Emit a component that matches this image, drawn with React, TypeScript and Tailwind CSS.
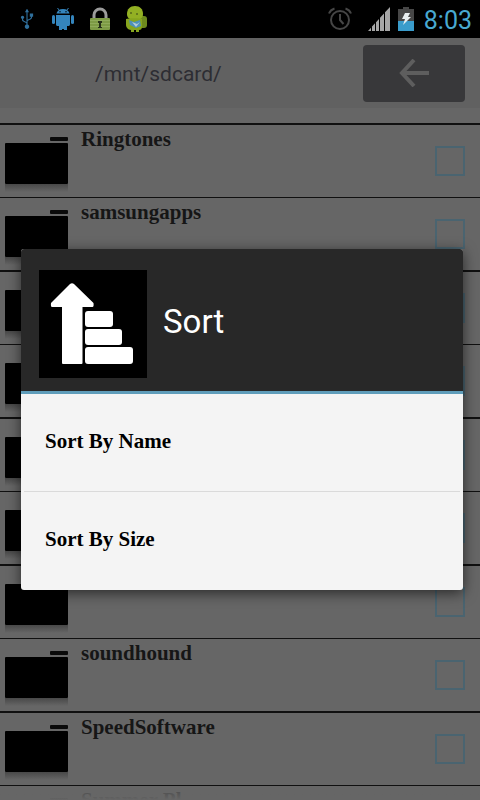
import { FaUsb } from "react-icons/fa";

const folders = [
  { id: 1, name: "Ringtones" },
  { id: 2, name: "samsungapps" },
  { id: 3, name: "" },
  { id: 4, name: "" },
  { id: 5, name: "" },
  { id: 6, name: "" },
  { id: 7, name: "" },
  { id: 8, name: "soundhound" },
  { id: 9, name: "SpeedSoftware" },
  { id: 10, name: "Summer Pl" },
];

const sortOptions = ["Sort By Name", "Sort By Size"];

function UsbIcon() {
  return <FaUsb className="-rotate-90 text-[#2f6f9c]" size={20} />;
}

function DebugIcon() {
  return (
    <svg width="24" height="24" viewBox="0 0 24 24" fill="#3485bd">
      <path d="M5.5 6.5C6 3.8 8.500 2 12 2s6 1.800 6.500 4.500z" />
      <path d="M6.500 1l2 2.500M17.500 1l-2 2.500" stroke="#3485bd" strokeWidth="1" />
      <path d="M5 8h14v9.500c0 .8-.7 1.500-1.500 1.500H16v4h-3v-1h-2v1H8v-4H6.500C5.700 19 5 18.300 5 17.500z" />
      <rect x="1" y="8" width="3" height="9" rx="1.500" />
      <rect x="20" y="8" width="3" height="9" rx="1.500" />
      <circle cx="9" cy="4.800" r=".7" fill="#000" />
      <circle cx="15" cy="4.800" r=".7" fill="#000" />
    </svg>
  );
}

function LockIcon() {
  return (
    <svg width="22" height="24" viewBox="0 0 22 24">
      <path d="M5 12V8a6 6 0 0 1 12 0v4" fill="none" stroke="#9b9b9b" strokeWidth="3" />
      <rect x="1" y="11" width="20" height="12" rx="1" fill="#7d9b45" />
      <path d="M1 13.500h20M1 16.500h20M1 19.500h20" stroke="#94ae5f" strokeWidth=".8" />
      <path d="M9 14h4v2h-1v4h1v1H9v-1h1v-4H9z" fill="#26301a" />
    </svg>
  );
}

function MascotIcon() {
  return (
    <svg width="22" height="28" viewBox="0 0 22 28">
      <rect x="14" y="11" width="8" height="12" rx="3" fill="#6d8a1e" />
      <path d="M2 9c0-5 3-8 8-8s8 3 8 8c0 4-3 6-8 6S2 13 2 9z" fill="#93b023" />
      <path d="M1 14c2-1 14-1 16 0v7c0 3-1 4-3 4v2h-3v-2H9v2H6v-2c-3 0-5-3-5-5z" fill="#86a51e" />
      <path d="M4 15l5 2 6-2 1 6-5 2-6-3z" fill="#4d91ba" />
      <path d="M7 17l5 2 3-2-4 5z" fill="#b4cbd6" />
      <circle cx="6" cy="8" r="1" fill="#55691a" />
      <circle cx="12" cy="9" r="1" fill="#55691a" />
    </svg>
  );
}

function AlarmIcon() {
  return (
    <svg width="24" height="24" viewBox="0 0 24 24" fill="none" stroke="#464646" strokeWidth="2">
      <circle cx="12" cy="13" r="9" />
      <path d="M12 7v6l3.500 4M1 6.500C2 4 4 2.300 6.500 1.500M23 6.500C22 4 20 2.300 17.500 1.500" />
    </svg>
  );
}

function SignalIcon() {
  return (
    <svg width="22" height="24" viewBox="0 0 22 24" fill="#a6a6a6">
      <path d="M0 24l3-3.300V24zM4 19.600l3-3.300V24H4zM8 15.200l3-3.300V24H8zM12 10.800l4-4.400V24h-4zM17 5.300L22 0v24h-5z" />
    </svg>
  );
}

function BatteryIcon() {
  return (
    <svg width="16" height="24" viewBox="0 0 16 24">
      <path d="M5 0h6v2h5v22H0V2h5z" fill="#474747" />
      <rect y="14" width="16" height="10" fill="#3a9ccb" />
      <path d="M7 6h5l-2 4h3l-8 8 2-6H4z" fill="#e8eef0" />
    </svg>
  );
}

function FolderIcon() {
  return (
    <svg className="shrink-0" width="64" height="60" viewBox="0 0 64 60">
      <defs>
        <linearGradient id="folder-shade" x1="0" y1="0" x2="0" y2="1">
          <stop offset="0" stopColor="#484848" />
          <stop offset="1" stopColor="#666666" />
        </linearGradient>
      </defs>
      <rect x="0" y="47" width="63" height="8" fill="url(#folder-shade)" />
      <rect x="45" y="0" width="18" height="4" rx="1" fill="#0a0a0a" />
      <rect x="0" y="6" width="63" height="41" rx="1" fill="#000" />
    </svg>
  );
}

function SortIcon() {
  return (
    <svg className="shrink-0" width="108" height="108" viewBox="0 0 108 108">
      <rect width="108" height="108" fill="#000" />
      <g fill="#fff">
        <path d="M31 14q2-1.500 4 0l19.500 19q.5 4-1 4H43.500v56q0 1-1 1H24q-1 0-1-1V37H13q-1.500 0-1-4z" />
        <rect x="46" y="41" width="28" height="16" rx="3" />
        <rect x="46" y="59" width="37" height="16" rx="3" />
        <rect x="46" y="77" width="48" height="17" rx="3" />
      </g>
    </svg>
  );
}

function StatusBar() {
  return (
    <div className="flex h-[38px] shrink-0 items-center justify-between bg-black pr-2 pl-[17px]">
      <div className="flex items-center gap-[14px]">
        <UsbIcon />
        <DebugIcon />
        <LockIcon />
        <MascotIcon />
      </div>
      <div className="flex items-center">
        <AlarmIcon />
        <div className="ml-4 flex items-center gap-2">
          <SignalIcon />
          <BatteryIcon />
        </div>
        <span className="ml-[10px] pt-[3px] text-[25px] leading-8 text-[#48a9d1]">8:03</span>
      </div>
    </div>
  );
}

export default function App() {
  return (
    <div className="flex h-screen flex-col overflow-hidden bg-[#666666] font-['Roboto',sans-serif]">
      <StatusBar />
      <div className="relative min-h-0 flex-1">
        <div className="h-full overflow-hidden">
          <header className="flex h-[70px] items-center justify-between bg-[#616161] pr-[15px] pl-[95px]">
            <h1 className="pt-0.5 text-[21px] leading-6 text-[#2d2d33]">/mnt/sdcard/</h1>
            <button
              type="button"
              aria-label="Back"
              className="flex h-[57px] w-[102px] items-center justify-center rounded bg-[#38383a]"
            >
              <svg width="30" height="28" viewBox="0 0 30 28" fill="none" stroke="#5e5e5e" strokeWidth="4">
                <path d="M30 14H4M15 1L3 14l12 13" />
              </svg>
            </button>
          </header>

          <ul className="mt-[15px]">
            {folders.map((f) => (
              <li key={f.id} className="border-[#101010] odd:border-t-2 even:border-t">
                <label className="flex h-[72px] pr-[15px] pl-[5px]">
                  <span className="pt-3">
                    <FolderIcon />
                  </span>
                  <span className="flex-1 pt-0.5 pl-3 font-['Liberation_Serif',serif] text-[21px] leading-6 font-bold text-[#161616]">
                    {f.name}
                  </span>
                  <input
                    type="checkbox"
                    aria-label={f.name || "Folder"}
                    className="size-[30px] appearance-none self-center border-2 border-[#4a6470]"
                  />
                </label>
              </li>
            ))}
          </ul>
        </div>

        {/* fading edge at the end of the scrolled list */}
        <div className="absolute inset-x-0 bottom-0 h-3 bg-linear-to-b from-[#666666]/60 to-[#666666]" />

        <div className="absolute inset-0 flex items-center pr-[17px] pl-[21px]">
          <div
            role="dialog"
            aria-labelledby="sort-title"
            className="w-full overflow-hidden rounded-[3px] bg-[#f4f4f4] shadow-[0_3px_14px_rgba(0,0,0,0.6)]"
          >
            <div className="flex h-[145px] items-center gap-4 border-b-3 border-[#5f9dba] bg-[#282828] px-[18px] pt-2">
              <SortIcon />
              <h2 id="sort-title" className="pb-1 text-[33px] leading-10 text-white">
                Sort
              </h2>
            </div>
            <div className="divide-y divide-[#dadada] px-[3px]">
              {sortOptions.map((option) => (
                <button
                  key={option}
                  type="button"
                  className="block h-[98px] w-full px-[21px] pb-[3px] text-left font-['Liberation_Serif',serif] text-[21px] leading-6 font-bold text-black"
                >
                  {option}
                </button>
              ))}
            </div>
          </div>
        </div>
      </div>
    </div>
  );
}
